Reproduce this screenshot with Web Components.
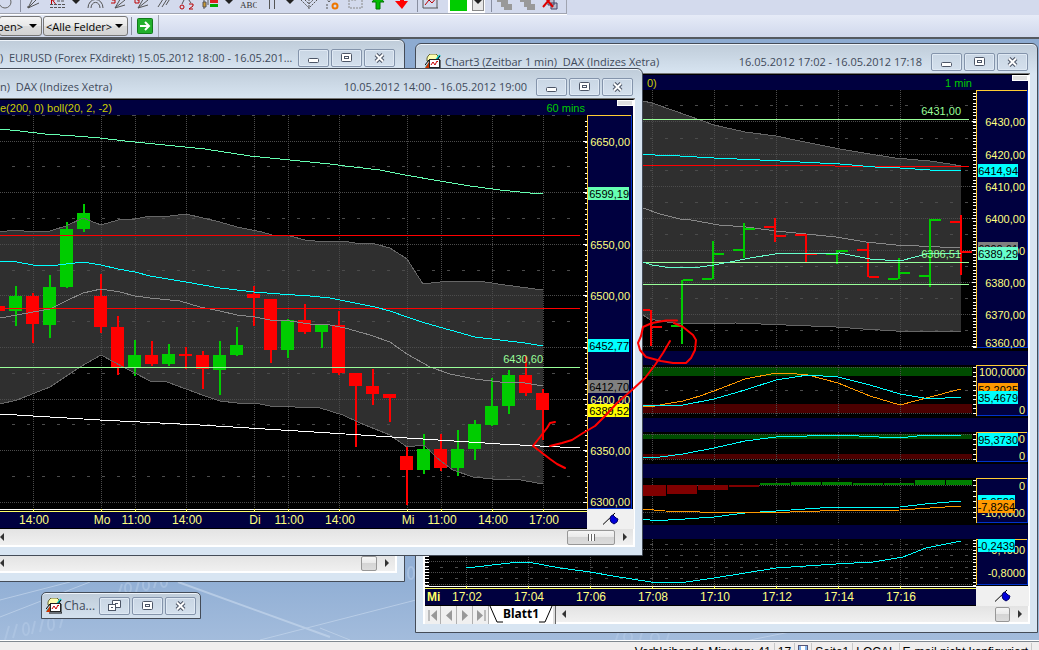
<!DOCTYPE html>
<html lang="de">
<head>
<meta charset="utf-8">
<title>Charts</title>
<style>
html, body{
    height: 100%;
}
body{
    margin: 0;
    display: flex;
    flex-direction: column;
    overflow: hidden;
    background: #f0f0f0;
    font-family: "Open Sans", "Noto Sans", sans-serif;
    font-size: 11px;
    color: #3f4a5a;
}
</style>
</head>
<body>
<tool-bars></tool-bars>
<desk-area>
    <chart-window style="left: -8px; top: 0; width: 413px; height: 543px">
        <span slot="title">)&nbsp; EURUSD (Forex FXdirekt) 15.05.2012 18:00 - 16.05.2012 19:00</span>
        <scroll-bar thumb="16" end="18"></scroll-bar>
    </chart-window>

    <chart-window style="left: 415px; top: 4px; width: 623px" inset="2">
        <chart-icon slot="icon"></chart-icon>
        <span slot="title">Chart3 (Zeitbar 1 min)&nbsp; DAX (Indizes Xetra)</span>
        <span slot="range">16.05.2012 17:02 - 16.05.2012 17:18</span>
        <chart-head style="--lead: 222px; --tail: 40px"><span>0)</span><span slot="span">1 min</span></chart-head>
        <chart-plot name="minute"></chart-plot>
        <time-axis name="minute"></time-axis>
        <sheet-tabs>Blatt1</sheet-tabs>
    </chart-window>

    <chart-window style="left: -8px; top: 29px; width: 651px">
        <span slot="title">n)&nbsp; DAX (Indizes Xetra)</span>
        <span slot="range">10.05.2012 14:00 - 16.05.2012 19:00</span>
        <chart-head style="--lead: 0px; --tail: 32px"><span>e(200, 0) boll(20, 2, -2)</span><span slot="span">60 mins</span></chart-head>
        <chart-plot name="hour"></chart-plot>
        <time-axis name="hour"></time-axis>
        <scroll-bar thumb="48" end="18" grip></scroll-bar>
    </chart-window>

    <chart-window mini style="left: 41px; top: 553px; width: 160px">
        <chart-icon slot="icon"></chart-icon>
        <span slot="title">Cha...</span>
    </chart-window>

    <pen-marks></pen-marks>
</desk-area>
<status-bar></status-bar>

<script>
const NAVY = "#00003f";
const GREEN = "#00cc00";
const RED = "#ff0000";
const LIME = "#99ff99";
const CYAN = "#00ffff";
const MINT = "#66ffb2";
const ORANGE = "#ff9900";
const GRID = "#4c4c4c";
const LABEL = "#ffff80";

function define(name, html, setup){
    const template = document.createElement("template");
    template.innerHTML = html;
    customElements.define(name, class extends HTMLElement{
        constructor(){
            super();
            this.attachShadow({mode: "open"});
            this.shadowRoot.appendChild(template.content.cloneNode(true));
        }
        connectedCallback(){
            if(setup) setup(this, this.shadowRoot);
        }
    });
}

// ---------- svg helpers ----------
const range = (from, to, step) => {
    const out = [];
    for(let v = from; v <= to; v += step) out.push(v);
    return out;
};
const line = (x1, y1, x2, y2, color, extra = "") =>
    `<line x1="${x1}" y1="${y1}" x2="${x2}" y2="${y2}" stroke="${color}" ${extra}/>`;
const poly = (points, color) => `<polyline points="${points}" fill="none" stroke="${color}"/>`;
const rect = (x, y, w, h, color) => `<rect x="${x}" y="${y}" width="${w}" height="${h}" fill="${color}"/>`;
const text = (x, y, str, color, anchor = "end") =>
    `<text x="${x}" y="${y}" fill="${color}" text-anchor="${anchor}">${str}</text>`;

function grid(xs, ys, dashes, x0, x1, y0, y1){
    return xs.map(x => line(x + .5, y0, x + .5, y1, GRID, `stroke-dasharray="1 1"`)).join("")
        + ys.map(y => line(x0, y + .5, x1, y + .5, GRID, `stroke-dasharray="1 1"`)).join("")
        + dashes.map(y => line(x0, y + .5, x1, y + .5, GRID, `stroke-dasharray="3 12"`)).join("");
}
const ticks = (x, w, ys) => ys.map(y => rect(x, Math.round(y), w, 1, "#fff")).join("");

// price column: yellow on the left and the top, blue on the right and the bottom
function scaleBox(x, y, w, h){
    return rect(x, y, w, h, NAVY) + rect(x + w - 1, y, 1, h, "#0033cc") + rect(x, y + h - 1, w, 1, "#0033cc")
        + rect(x, y, w - 1, 1, "#ffcc33") + rect(x, y, 1, h, "#ffcc33");
}
const tag = (x, y, w, str, color) => rect(x, y, w, 13, color) + text(x + w, y + 11, str, "#000");

// ---------- 60 minute chart ----------
// x, body top, body bottom, high, low, colour
const candles = [
    [15, 296, 311, 286, 326, 1], [32, 296, 324, 293, 343, 0], [49, 287, 325, 275, 338, 1],
    [66, 229, 287, 222, 288, 1], [83, 213, 229, 204, 232, 1], [100, 296, 327, 274, 333, 0],
    [117, 327, 367, 316, 375, 0], [134, 355, 367, 340, 376, 1], [151, 355, 364, 341, 366, 0],
    [168, 354, 364, 344, 366, 1], [185, 354, 356, 347, 369, 0], [202, 355, 369, 351, 389, 0],
    [219, 355, 370, 341, 395, 1], [236, 345, 355, 327, 356, 1], [253, 294, 298, 286, 326, 0],
    [270, 299, 350, 299, 363, 0], [287, 320, 350, 319, 358, 1], [304, 320, 332, 304, 334, 0],
    [321, 325, 332, 325, 348, 1], [338, 325, 373, 311, 375, 0], [355, 373, 386, 373, 447, 0],
    [372, 386, 394, 369, 405, 0], [389, 394, 398, 394, 422, 0], [406, 456, 470, 446, 505, 0],
    [423, 449, 470, 434, 474, 1], [440, 449, 468, 434, 471, 0], [457, 449, 468, 430, 476, 1],
    [474, 424, 449, 420, 460, 1], [491, 406, 425, 378, 426, 1], [508, 375, 406, 370, 414, 1],
    [525, 375, 393, 356, 396, 0], [542, 393, 410, 389, 440, 0]
];

function hourChart(){
    const upper = "0,232 14,230 33,232 50,231 66,226 83,218 101,225 118,220 135,219 150,216 170,216 186,214 220,222 237,227 262,232 272,235 290,236 305,240 325,242 343,241 355,243 375,244 390,248 407,259 423,284 440,282 460,281 485,282 505,285 543,290";
    const lower = "0,404 17,400 50,387 80,367 101,355 125,368 135,373 150,381 167,382 186,389 205,396 220,401 237,403 255,403 270,406 295,407 320,408 343,415 360,423 390,435 407,447 424,445 437,458 453,470 473,477 493,479 515,479 543,484";
    const area = upper + " " + lower.split(" ").reverse().join(" ");
    return `<svg width="633" height="394" viewBox="0 115 633 394">`
        + rect(0, 115, 633, 394, "#000")
        + `<polygon points="${area}" fill="#2f2f2f"/>`
        + grid([33, 101, 135, 186, 254, 288, 339, 407, 441, 492, 543],
            [141, 192, 244, 295, 347, 399, 450, 502], [], 0, 582, 115, 509)
        + `<g transform="translate(-3 0)">` + grid([], [], [115, 166, 218, 270, 321, 373, 424, 476], 0, 582, 0, 0) + `</g>`
        + rect(0, 306, 5, 5, RED)
        + candles.map(([x, top, bottom, high, low, up]) => {
            const color = up ? GREEN : RED;
            return rect(x, high, 2, low - high, color) + rect(x - 6, top, 13, bottom - top, color);
        }).join("")
        + poly(upper, "#666") + poly(lower, "#666")
        + poly("0,318 17,315 50,309 66,301 83,293 101,289 120,292 135,296 150,298 180,301 200,307 220,311 237,315 255,317 270,320 290,321 310,324 330,325 345,328 370,335 390,342 407,354 430,367 450,374 475,379 500,382 525,383 543,386", "#888")
        + rect(0, 235, 580, 1, RED) + rect(0, 308, 580, 1, RED)
        + rect(0, 367, 580, 1, LIME)
        + poly("0,129 20,131 45,134 75,136 100,138 125,141 165,145 205,149 250,156 290,160 330,164 345,166 380,170 405,175 440,181 470,186 500,190 530,193 543,194", MINT)
        + poly("0,261 17,262 33,265 50,266 83,262 101,265 118,269 135,272 150,276 186,282 220,288 254,292 280,294 310,296 330,298 355,303 375,307 390,311 407,317 425,323 450,330 475,337 500,340 525,343 543,346", CYAN)
        + poly("0,414 100,420 200,425 330,433 407,438 500,444 580,448", "#fff")
        + text(543, 363, "6430,60", LIME)
        + ticks(585, 2, range(121, 507, 5.15)) + ticks(583, 4, [141, 192, 244, 295, 347, 399, 450, 502])
        + scaleBox(587, 115, 45, 394)
        + [["6650,00", 146], ["6550,00", 249], ["6500,00", 300], ["6400,00", 404], ["6350,00", 455], ["6300,00", 506]]
            .map(([s, y]) => text(630, y, s, LABEL)).join("")
        + tag(588, 187, 41, "6599,19", MINT) + tag(588, 339, 41, "6452,77", CYAN)
        + tag(588, 380, 41, "6412,70", "#808080") + tag(588, 404, 41, "6389,52", "#ffff00")
        + `</svg>`;
}

// ---------- 1 minute chart with its four indicator panes ----------
// x, high, low, open, close, colour
const bars = [
    [651, 310, 346, 310, 327, 0], [682, 280, 344, 326, 280, 1], [713, 241, 279, 279, 254, 1],
    [744, 223, 258, 250, 229, 1], [775, 218, 242, 227, 236, 0], [806, 234, 263, 235, 254, 0],
    [837, 250, 264, 254, 251, 1], [868, 243, 277, 250, 277, 0], [899, 258, 279, 279, 273, 1],
    [930, 219, 287, 276, 220, 1], [961, 215, 275, 222, 252, 0]
];
const hist = [
    [636, 496], [667, 494], [698, 490], [729, 487], [760, 483], [791, 482],
    [822, 482], [853, 483], [884, 483], [915, 480], [946, 480]
];

function minuteChart(){
    const upper = "425,60 600,92 643,101 652,103 675,111 700,120 714,125 745,132 776,136 800,141 840,149 870,154 895,158 930,161 950,164 961,166";
    const lower = "425,300 643,315 649,319 679,324 736,323 786,325 836,327 863,329 896,331 961,331";
    const area = upper + " " + lower.split(" ").reverse().join(" ");
    const xs = [466, 528, 590, 652, 714, 776, 838, 900];
    return `<svg width="603" height="496" viewBox="425 90 603 496">`
        + rect(425, 90, 603, 496, "#000")
        + `<polygon points="${area}" fill="#2f2f2f"/>`
        + grid(xs, [121, 154, 186, 218, 250, 282, 314, 346], [105, 138, 170, 202, 234, 266, 298, 330], 425, 972, 90, 349)
        + poly(upper, "#666") + poly(lower, "#666")
        + poly("643,208 660,214 680,219 691,220 719,225 746,227 776,231 796,233 836,237 866,242 896,245 919,246 961,248", "#888")
        + bars.map(([x, high, low, open, close, up]) => {
            const color = up ? GREEN : RED;
            return rect(x - 1, high, 2, low - high, color) + rect(x - 11, open - 1, 10, 2, color)
                + rect(x + 1, close - 1, 10, 2, color);
        }).join("")
        + rect(425, 119, 544, 1, LIME) + rect(425, 262, 544, 1, LIME) + rect(425, 284, 544, 1, LIME)
        + rect(425, 165, 410, 1, RED) + rect(835, 166, 134, 1, RED)
        + poly("643,154 655,155 680,156 714,158 760,160 800,162 840,164 875,167 900,168 930,170 961,171", CYAN)
        + poly("643,262 652,265 665,267 685,268 700,267 714,265 735,261 750,258 775,254 840,253 855,256 870,259 900,261 915,257 930,253 961,253", "#66ffcc")
        + text(961, 115, "6431,00", LIME) + text(961, 258, "6386,51", LIME)
        + ticks(973, 3, range(93, 348, 3.21)) + ticks(972, 4, [121, 154, 186, 218, 250, 282, 314, 346])
        + scaleBox(976, 90, 52, 258)
        + [["6430,00", 126], ["6420,00", 159], ["6410,00", 191], ["6400,00", 223], ["6390,00", 255],
            ["6380,00", 287], ["6370,00", 319], ["6360,00", 347]].map(([s, y]) => text(1025, y, s, LABEL)).join("")
        + tag(978, 164, 40, "6414,94", CYAN) + tag(978, 242, 40, "6390,61", "#808080") + tag(978, 247, 40, "6389,29", "#66ffcc")
        // stochastic
        + rect(425, 351, 603, 14, NAVY) + rect(425, 367, 547, 9, "#004c00") + rect(425, 404, 547, 9, "#4c0000")
        + grid(xs, [367, 413], [390], 425, 972, 365, 416)
        + poly("643,406 655,406 665,404 683,401 700,396 714,391 745,379 776,373 785,373 808,375 838,383 870,396 900,405 915,401 930,397 961,389", ORANGE)
        + poly("643,405 683,405 714,399 745,390 776,380 808,375 838,377 870,385 900,394 930,399 961,397", CYAN)
        + ticks(973, 3, range(367, 414, 4.6)) + scaleBox(976, 365, 52, 51)
        + text(1025, 376, "100,0000", LABEL) + text(1025, 414, "0", LABEL)
        + tag(978, 383, 40, "52,2025", ORANGE) + tag(978, 391, 40, "35,4679", CYAN)
        // trend strength
        + rect(425, 418, 603, 14, NAVY) + rect(425, 434, 547, 5, "#004c00") + rect(425, 454, 547, 5, "#4c0000")
        + grid(xs, [434, 459], [], 425, 972, 432, 462)
        + poly("643,458 660,457 683,454 714,448 745,441 776,437 838,435 900,438 925,435 961,435", CYAN)
        + ticks(973, 3, range(434, 460, 5)) + scaleBox(976, 432, 52, 30)
        + text(1025, 443, "100,0000", LABEL) + text(1025, 460, "0", LABEL) + tag(978, 433, 40, "95,3730", CYAN)
        // macd
        + rect(425, 464, 603, 14, NAVY)
        + grid(xs, [485, 512], [], 425, 972, 478, 523)
        + hist.map(([x, y]) => y > 485 ? rect(x, 485, x > 940 ? 26 : 30, y - 485, "#800000")
            : rect(x, y, x > 940 ? 26 : 30, 485 - y, "#008000")).join("")
        + poly("643,519 650,520 668,520 685,519 714,517 745,513 776,511 820,508 900,507 925,504 961,501", CYAN)
        + poly("643,509 665,511 700,512 790,512 820,511 900,510 930,508 961,506", ORANGE)
        + ticks(973, 3, range(480, 520, 5.3)) + scaleBox(976, 478, 52, 45)
        + text(1025, 490, "0", LABEL) + text(1025, 517, "-10,0000", LABEL)
        + tag(978, 495, 37, "-5,9529", CYAN) + tag(978, 500, 37, "-7,8264", ORANGE)
        // momentum
        + rect(425, 525, 603, 14, NAVY)
        + grid(xs, [549, 561, 572, 584], [544, 555, 567, 578], 425, 972, 539, 586)
        + poly("466,568 510,563 528,562 560,568 590,572 613,576 651,582 686,582 714,578 776,568 836,564 873,562 903,557 926,548 961,541", CYAN)
        + ticks(425, 4, range(540, 585, 3.2)) + ticks(973, 3, range(540, 585, 3.2)) + scaleBox(976, 539, 52, 46)
        + text(1025, 554, "-0,4000", LABEL) + text(1025, 577, "-0,8000", LABEL) + tag(978, 539, 37, "-0,2439", CYAN)
        + `</svg>`;
}

const charts = {hour: hourChart, minute: minuteChart};

define("chart-plot", `
<style>
:host{
    display: block;
    background: #fff;
}
svg{
    display: block;
    shape-rendering: crispEdges;
    font-family: "Liberation Sans", sans-serif;
    font-size: 11px;
}
</style>
<div></div>
`, (el, root) => {
    root.querySelector("div").innerHTML = charts[el.getAttribute("name")]();
});

const times = {
    hour: {width: 587, x: 0, labels: [[33, "14:00"], [101, "Mo"], [135, "11:00"], [186, "14:00"], [254, "Di"],
        [288, "11:00"], [339, "14:00"], [407, "Mi"], [441, "11:00"], [492, "14:00"], [543, "17:00"]]},
    minute: {width: 551, x: 425, labels: [[466, "17:02"], [528, "17:04"], [590, "17:06"], [652, "17:08"],
        [714, "17:10"], [776, "17:12"], [838, "17:14"], [900, "17:16"]]}
};

define("time-axis", `
<style>
:host{
    display: flex;
    background: #f0f0f0;
    border-right: 1px solid #fff;
}
svg{
    display: block;
    shape-rendering: crispEdges;
    font-family: "Liberation Sans", sans-serif;
    font-size: 12px;
}
.corner{
    flex: 1;
    display: flex;
    align-items: center;
    justify-content: center;
}
</style>
<div class="axis"></div>
<div class="corner">
    <svg width="18" height="14" style="shape-rendering: auto">
        <path d="M1 12.500L13 1" stroke="#000" fill="none"/>
        <path d="M9 4l2-1 3 3 2 1-1 3-3 2-3-2-1-3z" fill="#0000d8" stroke="#000066"/>
    </svg>
</div>
`, (el, root) => {
    const {width, x, labels} = times[el.getAttribute("name")];
    root.querySelector(".axis").innerHTML = `<svg width="${width}" height="20" viewBox="${x} 0 ${width} 20">`
        + rect(x, 0, width, 20, "#000") + rect(x, 0, width, 1, "#fff")
        + rect(x, 3, width, 16, NAVY) + rect(x, 2, width, 1, "#ffff66")
        + labels.map(([at, str]) => rect(at, 0, 1, 3, "#ffff66") + text(at + 1, 15, str, "#ffff80", "middle")).join("")
        + (x ? `<text x="427" y="15" fill="#ffff66" font-weight="bold">Mi</text>` : "")
        + `</svg>`;
});

define("chart-head", `
<style>
:host{
    display: flex;
    justify-content: space-between;
    height: 16px;
    box-sizing: border-box;
    border-top: 1px solid #000;
    border-right: 2px solid #fff;
    background: #00003f;
    font: 11px/16px "Liberation Sans", sans-serif;
    color: #cccc00;
}
.left{
    padding-left: var(--lead);
}
.right{
    display: flex;
    gap: var(--tail);
    color: #00cc00;
}
button{
    width: 16px;
    height: 6px;
    padding: 0;
    border: 1px solid #fff;
    background: #e0e0e0;
}
</style>
<div class="left"><slot></slot></div>
<div class="right"><slot name="span"></slot><button aria-label="Kopfzeile"></button></div>
`);

define("chart-icon", `
<style>
:host{
    display: block;
    width: 16px;
    height: 16px;
}
svg{
    display: block;
}
</style>
<svg width="16" height="16">
    <path d="M3 2l2-2h6l2 2v5H2V4z" fill="#ffffb0" stroke="#666633"/>
    <path d="M15 1l-4 5M1 13l4-4" stroke="#00cccc" stroke-width="2"/>
    <path d="M15 2l-3 4M0 11l4-5" stroke="#000"/>
    <path d="M0 14l4-6v6z" fill="#cc3300"/>
    <rect x="4.500" y="5.500" width="10" height="8" fill="#fff" stroke="#222"/>
    <path d="M3 15h13V6" stroke="#000" fill="none"/>
    <path d="M6 11l2-3 2 3 2-4 1 1" fill="none" stroke="#cc0000"/>
</svg>
`);

define("chart-window", `
<style>
:host{
    position: absolute;
    box-sizing: border-box;
    display: flex;
    flex-direction: column;
    padding: 0 7px 8px;
    border: 1px solid #444c58;
    border-radius: 6px 6px 0 0;
    background: linear-gradient(#bfccd9, #d8e5f2 30px);
    box-shadow: inset 0 1px #eef4fa;
}
.title{
    display: flex;
    align-items: center;
    height: 30px;
    padding: 5px 2px 0 0;
    box-sizing: border-box;
    gap: 5px;
    white-space: nowrap;
}
.caption{
    flex: 1;
    min-width: 0;
    overflow: hidden;
    text-overflow: ellipsis;
}
slot[name="icon"]::slotted(*){
    margin-left: 2px;
    margin-right: -1px;
}
slot[name="range"]::slotted(*){
    margin-right: 4px;
}
.buttons{
    display: flex;
    gap: 2px;
}
button{
    width: 31px;
    height: 18px;
    padding: 0;
    display: grid;
    place-items: center;
    border: 1px solid #8494ab;
    border-radius: 2px;
    background: linear-gradient(#c9d6e4, #d4e0ed);
    box-shadow: inset 0 0 0 1px #dfe9f4;
}
svg{
    display: block;
}
.body{
    flex: 1;
    display: flex;
    flex-direction: column;
    justify-content: flex-end;
    background: #000;
    border-top: 1px solid #777;
    margin-top: -1px;
}
:host([inset]) .body{
    border-left: 2px solid #fff;
}
:host([mini]){
    padding: 0 4px 0 2px;
    border-radius: 5px 5px 0 0;
    height: 27px;
}
:host([mini]) .title{
    height: 25px;
    padding: 0;
    gap: 3px;
}
:host([mini]) .caption{
    overflow: visible;
    font-size: 12px;
}
:host([mini]) .body, .restore, :host([mini]) .min{
    display: none;
}
:host([mini]) .restore{
    display: block;
}
</style>
<div class="title">
    <slot name="icon"></slot>
    <div class="caption"><slot name="title"></slot></div>
    <slot name="range"></slot>
    <div class="buttons">
        <button aria-label="Minimieren">
            <svg class="min" width="13" height="12"><rect x="1.500" y="6.500" width="10" height="4" rx="1" fill="#fff" stroke="#4c5566"/></svg>
            <svg class="restore" width="13" height="12"><path d="M4.500 .500h8v7h-8z" fill="#fff" stroke="#4c5566"/><path d="M7 3.500h3" stroke="#4c5566"/><rect x=".500" y="4.500" width="7" height="6" fill="#fff" stroke="#4c5566"/><rect x="3" y="7" width="2" height="1" fill="#4c5566"/></svg>
        </button>
        <button aria-label="Maximieren">
            <svg width="13" height="12"><rect x="1.500" y="1.500" width="10" height="8" rx="1" fill="#fff" stroke="#4c5566"/><rect x="4.500" y="4.500" width="4" height="2" fill="#fff" stroke="#4c5566"/></svg>
        </button>
        <button aria-label="Schließen">
            <svg width="13" height="12"><path d="M3 2.500l7 7M10 2.500l-7 7" stroke="#4c5566" stroke-width="4"/><path d="M3 2.500l7 7M10 2.500l-7 7" stroke="#fff" stroke-width="2"/></svg>
        </button>
    </div>
</div>
<div class="body"><slot></slot></div>
`);

define("scroll-bar", `
<style>
:host{
    display: flex;
    height: 18px;
    box-sizing: border-box;
    align-items: center;
    border: solid #fff;
    border-width: 0 2px 2px 0;
    background: linear-gradient(#e3e3e3, #f0f0f0);
}
button{
    width: 16px;
    height: 16px;
    padding: 0;
    border: 0;
    background: none;
    display: grid;
    place-items: center;
}
.back{
    margin-left: var(--back, -6px);
}
.track{
    flex: 1;
    display: flex;
    justify-content: flex-end;
}
.thumb{
    height: 15px;
    box-sizing: border-box;
    display: grid;
    place-items: center;
    border: 1px solid #979797;
    border-radius: 2px;
    background: linear-gradient(#f5f5f5, #e9e9e9 50%, #d5d5d5 50%, #dcdcdc);
}
.grip{
    display: none;
    width: 7px;
    height: 7px;
    background: repeating-linear-gradient(to right, #666 0 1px, #fff 1px 3px);
}
:host([grip]) .grip{
    display: block;
}
</style>
<button class="back" aria-label="Zurück"><svg width="5" height="8"><path d="M4 0v8L0 4z" fill="#333"/></svg></button>
<div class="track"><div class="thumb"><i class="grip"></i></div></div>
<button class="next" aria-label="Weiter"><svg width="5" height="8"><path d="M1 0v8l4-4z" fill="#333"/></svg></button>
`, (el, root) => {
    root.querySelector(".thumb").style.width = el.getAttribute("thumb") + "px";
    root.querySelector(".next").style.width = el.getAttribute("end") + "px";
});

define("sheet-tabs", `
<style>
:host{
    display: flex;
    height: 18px;
    background: #fff;
    color: #000;
    font: bold 12px/16px "Noto Sans", sans-serif;
}
.nav{
    width: 16px;
    padding: 0;
    border: 0;
    border-right: 1px solid #b0b0b0;
    background: #f0f0f0;
    display: grid;
    place-items: center;
}
.tab{
    display: flex;
    border: 0;
    padding: 0;
    background: none;
    color: inherit;
    font: inherit;
}
.split{
    width: 2px;
    background: #ddd;
    border-right: 1px solid #666;
}
scroll-bar{
    flex: 1;
    --back: 0px;
}
</style>
<button class="nav" aria-label="Erstes"><svg width="10" height="11"><path d="M1 0v11" stroke="#888"/><path d="M9 0v11L3 5.500z" fill="#999"/></svg></button>
<button class="nav" aria-label="Voriges"><svg width="8" height="11"><path d="M7 0v11L1 5.500z" fill="#999"/></svg></button>
<button class="nav" aria-label="Nächstes"><svg width="8" height="11"><path d="M1 0v11l6-5.500z" fill="#999"/></svg></button>
<button class="nav" aria-label="Letztes"><svg width="10" height="11"><path d="M9 0v11" stroke="#888"/><path d="M1 0v11l6-5.500z" fill="#999"/></svg></button>
<button class="tab">
    <svg width="14" height="18"><path d="M1 0l7 16h6" fill="none" stroke="#000"/></svg>
    <slot></slot>
    <svg width="14" height="18"><path d="M0 16h6L13 0" fill="none" stroke="#000"/></svg>
</button>
<div class="split"></div>
<scroll-bar thumb="15" end="18"></scroll-bar>
`);

define("desk-area", `
<style>
:host{
    flex: 1;
    display: block;
    position: relative;
    overflow: hidden;
    min-height: 0;
    background: linear-gradient(#8dabd1, #91afd5 90%, #a3bcdc);
}
.wall{
    position: absolute;
    left: 0;
    top: 0;
}
</style>
<svg class="wall" width="1039" height="601" viewBox="0 39 1039 601" aria-hidden="true">
    <g stroke="#c4d6ec" fill="none" opacity=".7">
        <path d="M178 582L330 637" stroke-width="2"/>
        <path d="M0 600L70 582M0 617L90 582M260 640L416 600M320 628L350 640M750 640L790 632"/>
    </g>
    <g stroke="#b4cae6" stroke-width="2" fill="none" opacity=".6">
        <path d="M5 640l4-14M13 638l4-14M32 634l3-13M40 632l3-13M60 628l3-12M118 596l4-12M136 592l3-11M154 588l3-10M616 640l3-9M640 640l2-8M667 640l2-7"/>
        <ellipse cx="26" cy="629" rx="3" ry="6"/>
        <ellipse cx="51" cy="624" rx="3" ry="6"/>
        <ellipse cx="128" cy="588" rx="3" ry="5"/>
        <ellipse cx="146" cy="585" rx="3" ry="5"/>
        <ellipse cx="164" cy="582" rx="3" ry="5"/>
        <ellipse cx="411" cy="573" rx="3" ry="6"/>
        <ellipse cx="628" cy="637" rx="4" ry="5"/>
        <ellipse cx="655" cy="638" rx="4" ry="5"/>
    </g>
</svg>
<slot></slot>
`);

// hand drawn circle and arrow, running across both windows
define("pen-marks", `
<style>
:host{
    position: absolute;
    left: 0;
    top: 0;
    pointer-events: none;
}
svg{
    display: block;
}
</style>
<svg width="1039" height="601" viewBox="0 39 1039 601" fill="none" stroke="#ff0000" stroke-width="2" stroke-linecap="round" stroke-linejoin="round">
    <path d="M677 320.500H666L652 323L643 327L641 336L638 343L640 350L646 357L661 361L673 363H686L691 358L695 350L696 340L693 335L683 327L674 323"/>
    <path d="M670 341L663 353L655 365L645 378L632 390L617 403L606 415L595 426L583 433L572 440L562 443L550 446"/>
    <path d="M555 422L550 423L547 428L540 437L533 446L537 449L550 459L557 464L565 468"/>
</svg>
`);

const caret = `<button class="drop" aria-label="Auswahl"><svg width="9" height="16" viewBox="0 -6 9 16"><path d="M0 0h8L4 4z" fill="#222"/></svg></button>`;
const icon = (label, art) =>
    `<button aria-label="${label}"><svg width="17" height="16" viewBox="0 -6 17 16" fill="none" stroke="#555">${art}</svg></button>`;

define("tool-bars", `
<style>
:host{
    display: block;
    border-bottom: 2px solid #555a60;
    background: linear-gradient(#d3daed 0 15px, #e6ebf7 15px, #d0d8ec);
    color: #000;
}
.icons{
    display: flex;
    align-items: flex-end;
    height: 13px;
    overflow: hidden;
    width: 566px;
    border-bottom: 1px solid #a0a4b0;
    border-right: 1px solid #a0a4b0;
    box-shadow: 0 1px #fff;
}
.icons button{
    flex: none;
    width: 23px;
    height: 22px;
    padding: 0 0 3px;
    border: 0;
    background: none;
    display: flex;
    align-items: flex-end;
}
.icons button:first-child{
    margin-left: -4px;
}
.icons .drop{
    width: 15px;
}
.sep{
    flex: none;
    width: 1px;
    height: 12px;
    margin: 0 4px 1px 1px;
    background: #888ea0;
}
.color{
    flex: none;
    display: flex;
    align-items: flex-end;
    gap: 5px;
    height: 20px;
    margin: 0 5px 0 3px;
    padding: 0 1px 2px 2px;
    background: #fff;
}
.swatch{
    width: 17px;
    height: 16px;
    background: #00cc00;
}
.icons .color .drop{
    width: 12px;
    height: 16px;
    margin: 0;
    padding: 0;
    justify-content: center;
    border: 1px solid #888;
    background: #e8e8e8;
}
.fields{
    display: flex;
    align-items: center;
    gap: 1px;
    height: 22px;
    margin-top: 1px;
    width: 158px;
    border-right: 1px solid #a0a4b0;
}
.field{
    height: 20px;
    box-sizing: border-box;
    margin: 0;
    border: 1px solid #777;
    border-radius: 3px;
    background: linear-gradient(#f4f4f4, #e8e8e8 50%, #dcdcdc 50%, #d2d2d2);
    display: flex;
    align-items: center;
    padding-right: 4px;
}
select{
    appearance: none;
    flex: 1;
    min-width: 0;
    border: 0;
    padding: 0 0 0 2px;
    background: none;
    font: 11px "Open Sans", sans-serif;
    color: #000;
}
.clipped{
    width: 43px;
    margin-left: -1px;
}
.clipped select{
    padding: 0;
    margin-left: -3px;
}
.wide{
    width: 85px;
}
.go{
    width: 16px;
    height: 16px;
    padding: 0;
    border: 0;
    background: none;
}
.go svg{
    display: block;
}
.fields .sep{
    height: 18px;
    margin: 0 4px 0 2px;
}
</style>
<div class="icons">
    ${icon("Kreis", `<circle cx="9" cy="2" r="6" stroke="#666"/>`)}
    <div class="sep"></div>
    <div class="sep" style="visibility: hidden; margin: 0"></div>
    ${icon("Fächer", `<path d="M2 8L8-4M2 8L12-2M2 8L13 3M1 7h3"/>`)}
    ${icon("Regression", `<path d="M8 1h8M1 4.500h15M1 7.500h15" stroke-dasharray="3 1"/><path d="M2.500 4v-8h3v4h-2l3 4" stroke="#b00"/>`)}
    ${caret}
    ${icon("Bögen", `<path d="M1 8a7 8 0 0 1 15 0M4 8a4 5 0 0 1 9 0"/>`)}
    ${icon("Speed", `<path d="M5 8L12-4M5 8L15 0M5 8l10-3"/><path d="M5-4H2v4h3v3H1" stroke="#b00"/>`)}
    ${icon("Gann", `<path d="M5 8L12-4M5 8L15 0M5 8l10-3"/><path d="M6-4H2v7h4V0H4" stroke="#b00"/>`)}
    ${icon("Parallelen", `<path d="M2 7L9-4M6 7l7-11M10 5l5-8"/>`)}
    ${icon("Wellen", `<path d="M3 4l4-8 5 7"/><circle cx="3" cy="7" r="2" stroke="#b00"/><path d="M10 4h4v2l-4 3h4" stroke="#b00"/>`)}
    ${icon("Kerzen", `<path d="M2-2V9M6-4V5"/><path d="M1 2h3v5H1z" fill="#cc9933"/><path d="M8-3h8v2H8zM8 4h8v3H8z" fill="#00aa00" stroke="none"/><path d="M8 0h8v3H8z" fill="#dd2222" stroke="none"/>`)}
    ${caret}
    ${icon("Text", `<text x="0" y="8" fill="#333" stroke="none" font-family="Liberation Serif, serif" font-size="9">ABC</text>`)}
    ${icon("Zeitzonen", `<path d="M6.500-6V9M11.500-6V9"/>`)}
    ${caret}
    ${icon("Raute", `<path d="M0 0l8 8 8-8M4 0l4 4 4-4M8-4v13M3-2v3M13-2v3" stroke-dasharray="2 1"/>`)}
    ${icon("Objekte", `<path d="M2-2l3 4M8-2L5 2M3 9V4" stroke-dasharray="2 1"/><circle cx="11" cy="6" r="2.500" stroke="#ee7700" stroke-width="2"/>`)}
    ${icon("Auswahl", `<path d="M2 0v8h13V0l-3-2-3 2H4" stroke="#888" stroke-dasharray="2 1"/>`)}
    ${icon("Hoch", `<path d="M6 9V2H2l6-7 6 7h-4v7z" fill="#00bb00" stroke="#007700"/>`)}
    ${icon("Runter", `<path d="M7-6v7H2l7 8 6-8h-4v-7z" fill="#ff0000" stroke="none"/>`)}
    <div class="sep"></div>
    ${icon("Diagramm", `<path d="M1-5V8h15M15-5V8"/><path d="M3 5l4-5 3 3 5-6" stroke="#b00"/>`)}
    <div class="color"><div class="swatch"></div>${caret}</div>
    <div class="sep"></div>
    ${icon("Nach vorn", `<path d="M1-4h7v4h4v4h4v6H8V7H5V2H1z" fill="#999" stroke="none"/>`)}
    ${icon("Nach hinten", `<path d="M1-4h7v4h4v4h4v6H8V7H5V2H1z" fill="#999" stroke="none"/>`)}
    ${icon("Löschen", `<path d="M6-1h6v6H6zM9 3h6v6H9z" fill="#bbc" stroke="#446"/><path d="M1 7L12-6M2-4l9 11" stroke="#dd0000" stroke-width="2"/>`)}
</div>
<div class="fields">
    <div class="field clipped"><select aria-label="Gruppen"><option>pen&gt;</option></select><svg width="8" height="5"><path d="M0 0h8L4 4z" fill="#000"/></svg></div>
    <div class="field wide"><select aria-label="Felder"><option>&lt;Alle Felder&gt;</option></select><svg width="8" height="5"><path d="M0 0h8L4 4z" fill="#000"/></svg></div>
    <div class="sep"></div>
    <button class="go" aria-label="Los"><svg width="16" height="16"><rect x=".500" y=".500" width="15" height="15" rx="1" fill="#22b02c" stroke="#117a1a"/><path d="M3 8h9M8 4l4 4-4 4" fill="none" stroke="#fff" stroke-width="2"/></svg></button>
</div>
`);

define("status-bar", `
<style>
:host{
    display: block;
    height: 10px;
    overflow: hidden;
    box-sizing: border-box;
    border-top: 1px solid #fff;
    background: #f0eeee;
    color: #000;
    font: 12px/15px "Liberation Sans", sans-serif;
}
.row{
    display: flex;
    justify-content: flex-end;
    border-top: 1px solid #808890;
    padding: 1px 7px 0 0;
}
.cell{
    padding: 2px 3px 0;
    border-right: 1px solid #c8c8c8;
    white-space: nowrap;
}
svg{
    display: block;
}
</style>
<div class="row">
    <div class="cell">Verbleibende Minuten: 41</div>
    <div class="cell">17</div>
    <div class="cell"><svg width="10" height="10"><rect x=".500" y=".500" width="9" height="9" fill="#88b8ee" stroke="#557"/><rect x="3" y="1" width="4" height="4" fill="#fff"/></svg></div>
    <div class="cell">Seite1</div>
    <div class="cell">LOCAL</div>
    <div class="cell">E-mail nicht konfiguriert</div>
</div>
`);
</script>
</body>
</html>
